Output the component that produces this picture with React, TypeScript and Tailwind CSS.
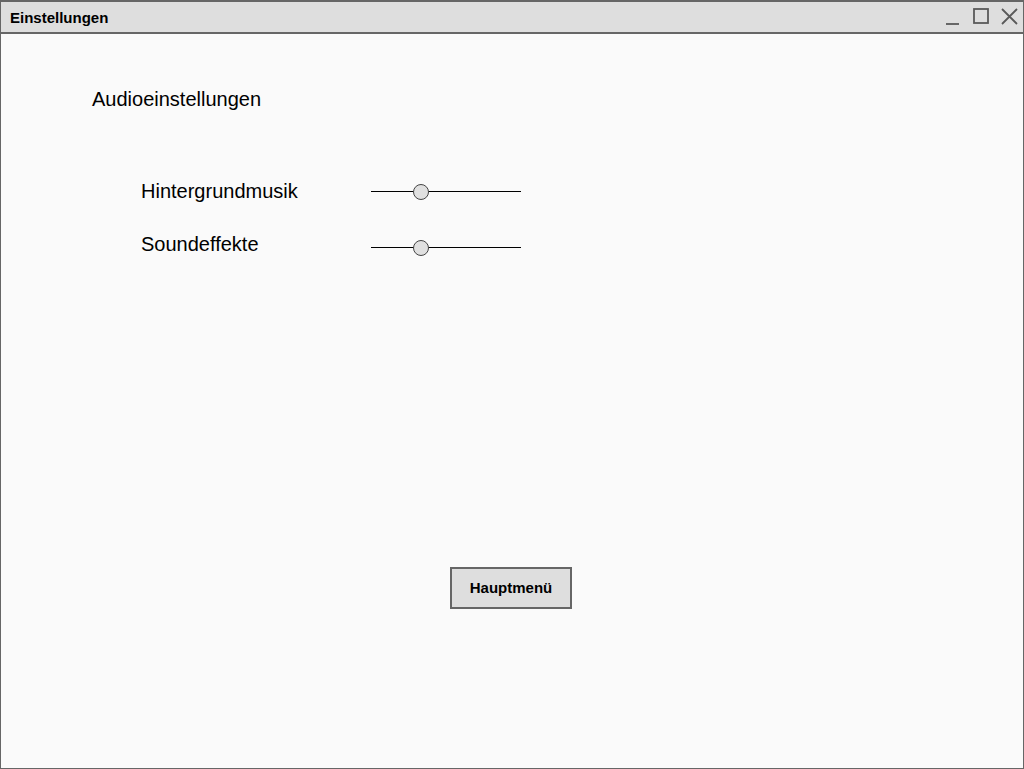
import { useState } from 'react';

interface SliderProps {
    value: number;
    onChange: (v: number) => void;
    className?: string;
}

function Slider({ value, onChange, className = '' }: SliderProps) {
    // the thumb sits over the track, so it is placed from the value
    return (
        <div
            className={`relative h-[16px] w-[150px] ${className}`}
            onClick={(e) => {
                const r = e.currentTarget.getBoundingClientRect();
                onChange(Math.round(((e.clientX - r.left) / r.width) * 100));
            }}
        >
            <div className="absolute left-0 right-0 top-[7px] h-px bg-black" />
            <div
                className="absolute top-[0px] h-[16px] w-[16px] -translate-x-1/2 rounded-full border border-[#444] bg-[#e0e0e0]"
                style={{ left: `${value}%` }}
            />
        </div>
    );
}

export default function App() {
    const [music, setMusic] = useState(33.5);
    const [effects, setEffects] = useState(33.5);

    return (
        <div
            className="flex h-[769px] w-[1024px] flex-col border border-t-2 border-[#666] bg-[#fafafa] text-black"
            style={{ fontFamily: '"Liberation Sans", Arial, sans-serif' }}
        >
            <div className="flex h-[32px] shrink-0 items-center justify-between border-b-2 border-[#666] bg-[#dedede] pl-[9px] pr-[4px]">
                <span className="mt-[2px] text-[15px] font-bold">Einstellungen</span>
                <div className="flex items-center gap-[10px]">
                    <svg width="18" height="18" viewBox="0 0 18 18" className="mt-[2px]">
                        <line x1="3" y1="15" x2="16" y2="15" stroke="#5a5a5a" strokeWidth="1.8" />
                    </svg>
                    <svg width="18" height="18" viewBox="0 0 18 18">
                        <rect x="3" y="1" width="14" height="14" fill="none" stroke="#5a5a5a" strokeWidth="1.8" />
                    </svg>
                    <svg width="20" height="20" viewBox="0 0 20 20" className="-mt-[1px]">
                        <path d="M3 2 L18 17 M18 2 L3 17" stroke="#5a5a5a" strokeWidth="1.8" />
                    </svg>
                </div>
            </div>

            <div className="flex flex-1 flex-col pl-[91px] pt-[53px]">
                <h1 className="text-[20px] leading-[24px]">Audioeinstellungen</h1>

                <div className="mt-[68px] flex flex-col pl-[49px]">
                    <div className="flex h-[24px] items-center">
                        <span className="w-[230px] text-[20px]">Hintergrundmusik</span>
                        <Slider value={music} onChange={setMusic} className="mt-[2px]" />
                    </div>
                    <div className="mt-[29px] flex h-[24px] items-center">
                        <span className="w-[230px] text-[20px]">Soundeffekte</span>
                        <Slider value={effects} onChange={setEffects} className="mt-[8px]" />
                    </div>
                </div>

                <div className="mt-[311px] pl-[358px]">
                    <button className="h-[42px] w-[122px] border-2 border-[#666] bg-[#dedede] text-[15px] font-bold">
                        Hauptmenü
                    </button>
                </div>
            </div>
        </div>
    );
}
